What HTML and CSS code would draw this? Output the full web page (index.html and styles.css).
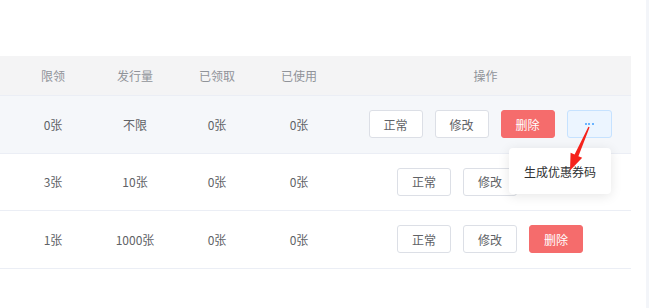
FILE: index.html
```html
<!DOCTYPE html>
<html lang="zh-CN">
<head>
  <meta charset="UTF-8" />
  <title>优惠券列表</title>
  <link rel="stylesheet" href="styles.css">
</head>
<body>
  <div class="page">
    <div class="table-wrap">
      <div class="coupon-table">
        <div class="row head">
          <div class="cell"></div>
          <div class="cell">限领</div>
          <div class="cell">发行量</div>
          <div class="cell">已领取</div>
          <div class="cell">已使用</div>
          <div class="cell">操作</div>
        </div>

        <div class="row hover">
          <div class="cell"></div>
          <div class="cell">0张</div>
          <div class="cell">不限</div>
          <div class="cell">0张</div>
          <div class="cell">0张</div>
          <div class="cell actions">
            <button class="btn">正常</button>
            <button class="btn">修改</button>
            <button class="btn danger">删除</button>
            <button class="btn more"><i></i><i></i><i></i></button>
          </div>
        </div>

        <div class="row">
          <div class="cell"></div>
          <div class="cell">3张</div>
          <div class="cell">10张</div>
          <div class="cell">0张</div>
          <div class="cell">0张</div>
          <div class="cell actions">
            <button class="btn">正常</button>
            <button class="btn">修改</button>
            <!-- covered by the open dropdown -->
            <button class="btn danger covered">删除</button>
          </div>
        </div>

        <div class="row">
          <div class="cell"></div>
          <div class="cell">1张</div>
          <div class="cell">1000张</div>
          <div class="cell">0张</div>
          <div class="cell">0张</div>
          <div class="cell actions">
            <button class="btn">正常</button>
            <button class="btn">修改</button>
            <button class="btn danger">删除</button>
          </div>
        </div>
      </div>
    </div>
    <div class="side"></div>

    <!-- dropdown of the "..." button -->
    <div class="popover">生成优惠券码</div>

    <!-- red annotation arrow -->
    <svg class="mark" width="649" height="308" viewBox="0 0 649 308">
      <polygon fill="#f5221b" points="589.6,127.2 578.4,156.2 582.2,157.8 570,170.5 570.6,152.8 574.6,154.5 588.4,126.8" />
    </svg>
  </div>
</body>
</html>
```

FILE: styles.css
```css
body {
  margin: 0;
  background: #fff;
  font-family: "Noto Sans CJK SC", "Microsoft YaHei", sans-serif;
  font-size: 12px;
  color: #606266;
}

.page {
  position: relative;
  display: flex;
  width: 649px;
  height: 308px;
  overflow: hidden;
}

.table-wrap {
  width: 631px;
  padding-top: 56px;
}

.side {
  width: 15px;
  border-right: 3px solid #f3f5f9;
}

.row {
  display: grid;
  grid-template-columns: 12px 82px 82px 82px 82px 1fr;
  height: 56.5px;
  border-bottom: 1px solid #ebeef5;
}

.row.head {
  height: 39px;
  background: #f4f4f5;
  color: #909399;
}

.row.hover {
  background: #f5f7fa;
}

.cell {
  display: flex;
  align-items: center;
  justify-content: center;
}

.cell.actions {
  gap: 12px;
  padding-left: 9px;
}

.btn {
  box-sizing: border-box;
  width: 54px;
  height: 28px;
  padding: 0;
  border: 1px solid #dcdfe6;
  border-radius: 3px;
  background: #fff;
  color: #606266;
  font-family: inherit;
  font-size: 12px;
}

.btn.danger {
  background: #f56c6c;
  border-color: #f56c6c;
  color: #fff;
}

.btn.covered {
  visibility: hidden;
}

.btn.more {
  width: 45px;
  display: flex;
  align-items: center;
  justify-content: center;
  gap: 1.5px;
  background: #ecf5ff;
  border-color: #c6e2ff;
}

.btn.more i {
  width: 2px;
  height: 2px;
  border-radius: 50%;
  background: #409eff;
}

.popover {
  position: absolute;
  left: 509px;
  top: 148px;
  width: 102px;
  height: 46px;
  display: flex;
  align-items: center;
  justify-content: center;
  background: #fff;
  border-radius: 4px;
  box-shadow: 0 2px 12px rgba(0, 0, 0, 0.1);
  color: #303133;
}

.mark {
  position: absolute;
  left: 0;
  top: 0;
  pointer-events: none;
}
```
